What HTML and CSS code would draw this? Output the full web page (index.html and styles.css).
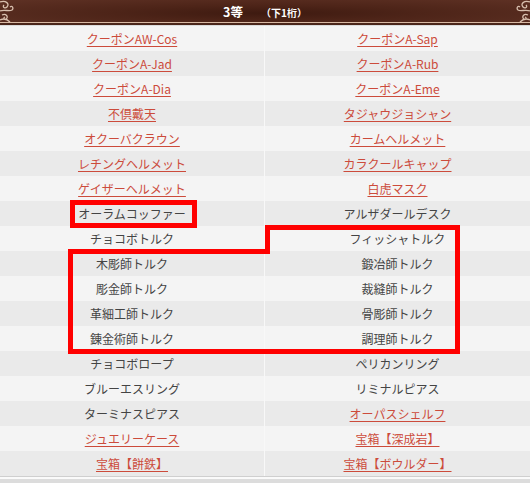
FILE: index.html
```html
<!DOCTYPE html>
<html lang="ja">
<head>
<meta charset="utf-8">
<link rel="stylesheet" href="styles.css">
</head>
<body>
<div class="page">
  <div class="head">
    <svg class="orn orn-l" width="30" height="24" viewBox="0 0 30 24"><path d="M0 3 C6 1 10 5 7 8 C5 10 2 8 4 6 M0 12 C5 10 9 13 12 11 C14 9 12 6 10 8 M2 16 C6 14 9 18 6 20 C4 21 3 19 5 18 M0 21 C4 19 8 21 10 23" fill="none" stroke="#d8bfae" stroke-width="1.3"/></svg>
    <div class="title"><span class="t1">3等</span><span class="t2">（下1桁）</span></div>
    <svg class="orn orn-r" width="30" height="24" viewBox="0 0 30 24"><path d="M30 3 C24 1 20 5 23 8 C25 10 28 8 26 6 M30 12 C25 10 21 13 18 11 C16 9 18 6 20 8 M28 16 C24 14 21 18 24 20 C26 21 27 19 25 18 M30 21 C26 19 22 21 20 23" fill="none" stroke="#d8bfae" stroke-width="1.3"/></svg>
  </div>
  <div class="rows">
    <div class="row"><div class="cell"><a href="#">クーポンAW-Cos</a></div><div class="cell"><a href="#">クーポンA-Sap</a></div></div>
    <div class="row"><div class="cell"><a href="#">クーポンA-Jad</a></div><div class="cell"><a href="#">クーポンA-Rub</a></div></div>
    <div class="row"><div class="cell"><a href="#">クーポンA-Dia</a></div><div class="cell"><a href="#">クーポンA-Eme</a></div></div>
    <div class="row"><div class="cell"><a href="#">不倶戴天</a></div><div class="cell"><a href="#">タジャウジョシャン</a></div></div>
    <div class="row"><div class="cell"><a href="#">オクーバクラウン</a></div><div class="cell"><a href="#">カームヘルメット</a></div></div>
    <div class="row"><div class="cell"><a href="#">レチングヘルメット</a></div><div class="cell"><a href="#">カラクールキャップ</a></div></div>
    <div class="row"><div class="cell"><a href="#">ゲイザーヘルメット</a></div><div class="cell"><a href="#">白虎マスク</a></div></div>
    <div class="row"><div class="cell">オーラムコッファー</div><div class="cell">アルザダールデスク</div></div>
    <div class="row"><div class="cell">チョコボトルク</div><div class="cell">フィッシャトルク</div></div>
    <div class="row"><div class="cell">木彫師トルク</div><div class="cell">鍛冶師トルク</div></div>
    <div class="row"><div class="cell">彫金師トルク</div><div class="cell">裁縫師トルク</div></div>
    <div class="row"><div class="cell">革細工師トルク</div><div class="cell">骨彫師トルク</div></div>
    <div class="row"><div class="cell">錬金術師トルク</div><div class="cell">調理師トルク</div></div>
    <div class="row"><div class="cell">チョコボロープ</div><div class="cell">ペリカンリング</div></div>
    <div class="row"><div class="cell">ブルーエスリング</div><div class="cell">リミナルピアス</div></div>
    <div class="row"><div class="cell">ターミナスピアス</div><div class="cell"><a href="#">オーパスシェルフ</a></div></div>
    <div class="row"><div class="cell"><a href="#">ジュエリーケース</a></div><div class="cell"><a href="#">宝箱【深成岩】</a></div></div>
    <div class="row"><div class="cell"><a href="#">宝箱【餅鉄】</a></div><div class="cell"><a href="#">宝箱【ボウルダー】</a></div></div>
  </div>
  <div class="foot"></div>
  <svg class="marks" width="530" height="483" viewBox="0 0 530 483">
    <rect x="72.5" y="202.5" width="122" height="23" fill="none" stroke="#ff0000" stroke-width="5"/>
    <polygon points="70.5,251.5 267.5,251.5 267.5,227.5 457.5,227.5 457.5,351.5 70.5,351.5" fill="none" stroke="#ff0000" stroke-width="5"/>
  </svg>
</div>
</body>
</html>
```
FILE: styles.css
```css
html, body {
  margin: 0;
  padding: 0;
  background: #dcdcdc;
}
.page {
  position: relative;
  width: 530px;
  height: 483px;
  overflow: hidden;
  font-family: "Noto Sans CJK JP", "Noto Sans", sans-serif;
  font-size: 12px;
  color: #444;
}
.head {
  height: 22px;
  display: flex;
  align-items: center;
  justify-content: space-between;
  background:
    radial-gradient(ellipse at 50% 60%, #3e1a10 0%, #4d2418 40%, #5e3124 100%);
  border-bottom: 1px solid #d9b9a4;
  box-shadow: 0 2px 0 #4a2519;
  margin-bottom: 3px;
}
.orn { display: block; }
.title {
  display: flex;
  align-items: baseline;
  gap: 18px;
  color: #fff;
  font-weight: bold;
  margin-left: 0;
}
.t1 { font-size: 12.5px; }
.t2 { font-size: 10px; }
.rows {
  display: flex;
  flex-direction: column;
}
.row {
  height: 25px;
  display: grid;
  grid-template-columns: 265px 265px;
  background: #f4f4f4;
}
.row:nth-child(even) { background: #eaeaea; }
.cell {
  display: flex;
  align-items: center;
  justify-content: center;
  line-height: 1;
}
.cell:first-child { border-right: 1px solid #f8f8f8; }
.cell a {
  color: #cc4b3b;
  text-decoration: underline;
  text-underline-offset: 2px;
}
.foot {
  height: 7px;
  border-top: 1px solid #cfcfcf;
  box-shadow: inset 0 2px 0 #fafafa;
  background: #dcdcdc;
}
.marks {
  position: absolute;
  left: 0;
  top: 0;
  pointer-events: none;
}
```
